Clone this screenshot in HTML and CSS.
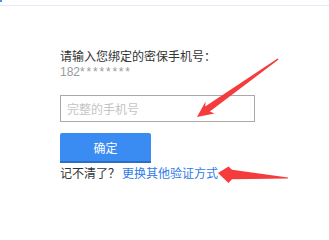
FILE: index.html
```html
<!DOCTYPE html>
<html lang="zh-CN">
<head>
<meta charset="utf-8">
<title>密保手机验证</title>
<link rel="stylesheet" href="styles.css">
</head>
<body>
<div class="top"><span class="top-corner"></span></div>
<div class="form">
  <p class="label">请输入您绑定的密保手机号：</p>
  <p class="masked">182<span class="stars">********</span></p>
  <input class="phone" type="text" placeholder="完整的手机号">
  <button class="confirm" type="button">确定</button>
  <p class="help">记不清了？<a class="switch" href="#">更换其他验证方式</a></p>
</div>
<svg class="arrows" width="329" height="217" viewBox="0 0 329 217" aria-hidden="true">
  <polygon class="arrow" points="197,117 214.5,113.5 209.8,111.6 278.6,59.6 277.6,58.4 205.2,106.4 205.6,101.6"/>
  <polygon class="arrow" points="218,173 228.5,166.5 232,169.8 288,177.6 288,178.6 232,179.2 228.5,183"/>
</svg>
</body>
</html>
```
FILE: styles.css
```css
html, body {
  margin: 0;
  padding: 0;
  background: #ffffff;
}
body {
  position: relative;
  width: 329px;
  height: 217px;
  overflow: hidden;
  font-family: "Noto Sans CJK SC", "Liberation Sans", sans-serif;
  font-size: 12px;
  color: #333333;
}
.top {
  display: flex;
  height: 5px;
  border-bottom: 1px solid #e1eaf6;
}
.top-corner {
  width: 2px;
  height: 2px;
  background: #4a8ff0;
}
.form {
  display: flex;
  flex-direction: column;
  align-items: flex-start;
  padding: 41px 0 0 60px;
}
.label,
.masked,
.help {
  margin: 0;
  line-height: 17px;
  white-space: nowrap;
}
.label {
  color: #333333;
}
.masked {
  color: #9a9a9a;
  font-family: "Liberation Sans", "Noto Sans CJK SC", sans-serif;
}
.stars {
  letter-spacing: 1.8px;
}
.phone {
  box-sizing: border-box;
  width: 195px;
  height: 27px;
  margin: 14px 0 0 0;
  padding: 0 6px;
  border: 1px solid #a9a9a9;
  border-radius: 0;
  font-family: inherit;
  font-size: 12px;
  color: #333333;
  outline: none;
}
.phone::placeholder {
  color: #c4c4c4;
}
.confirm {
  box-sizing: border-box;
  width: 91px;
  height: 30px;
  margin: 11px 0 0 0;
  padding: 0;
  border: none;
  border-bottom: 2px solid #2e6fc6;
  border-radius: 2px 2px 0 0;
  background: #3a8cf2;
  color: #ffffff;
  font-family: inherit;
  font-size: 12px;
}
.help {
  margin-top: 1px;
  color: #333333;
}
.switch {
  margin-left: 2px;
  color: #2f7be6;
  text-decoration: none;
}
.arrows {
  position: absolute;
  top: 0;
  left: 0;
  pointer-events: none;
}
.arrow {
  fill: #f43c3c;
}
```
